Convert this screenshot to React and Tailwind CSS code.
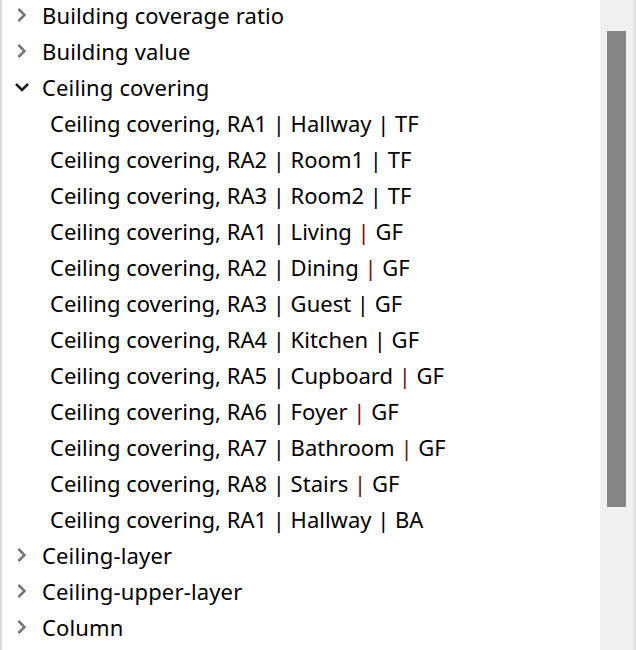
import React from 'react';

const ChevronRight = () => (
  <svg width="12" height="16" viewBox="0 0 12 16" className="text-[#777777]">
    <path d="M2.5 2 L8.5 8 L2.5 14" fill="none" stroke="currentColor" strokeWidth="2.5" />
  </svg>
);

const ChevronDown = () => (
  <svg width="16" height="12" viewBox="0 0 16 12" className="text-[#1a1a1a]">
    <path d="M2 3 L8 9 L14 3" fill="none" stroke="currentColor" strokeWidth="2.5" />
  </svg>
);

const children = [
  ['RA1', 'Hallway', 'TF'],
  ['RA2', 'Room1', 'TF'],
  ['RA3', 'Room2', 'TF'],
  ['RA1', 'Living', 'GF', true],
  ['RA2', 'Dining', 'GF', true],
  ['RA3', 'Guest', 'GF'],
  ['RA4', 'Kitchen', 'GF'],
  ['RA5', 'Cupboard', 'GF', true],
  ['RA6', 'Foyer', 'GF', true],
  ['RA7', 'Bathroom', 'GF', true],
  ['RA8', 'Stairs', 'GF', true],
  ['RA1', 'Hallway', 'BA'],
];

const TopRow = ({ label, open }) => (
  <div className="flex items-center h-[36px]">
    <div className="w-[40px] flex justify-center">
      {open ? <ChevronDown /> : <ChevronRight />}
    </div>
    <span className="tracking-[0.15px]">{label}</span>
  </div>
);

export default function App() {
  return (
    <div
      className="w-[636px] h-[650px] bg-white flex overflow-hidden text-black text-[22px]"
      style={{ fontFamily: '"Noto Sans", sans-serif' }}
    >
      <div className="w-[2px] bg-[#dadada]" />
      <div className="flex-1 flex flex-col -mt-[3px]">
        <TopRow label="Building coverage ratio" />
        <TopRow label="Building value" />
        <TopRow label="Ceiling covering" open />
        {children.map(([ra, room, fl, red], i) => (
          <div key={i} className="flex items-center h-[36px] pl-[48px] whitespace-pre">
            <span>
              Ceiling covering, {ra} | {room}{' '}
              <span className={red ? 'text-[#6a1010]' : ''}>|</span> {fl}
            </span>
          </div>
        ))}
        <TopRow label="Ceiling-layer" />
        <TopRow label="Ceiling-upper-layer" />
        <TopRow label="Column" />
      </div>
      <div className="w-[33px] bg-[#f0f0f0] flex flex-col pt-[31px] pl-[7px]">
        <div className="w-[19px] h-[476px] bg-[#858585]" />
      </div>
      <div className="w-[3px] bg-[#e3e3e3]" />
    </div>
  );
}
